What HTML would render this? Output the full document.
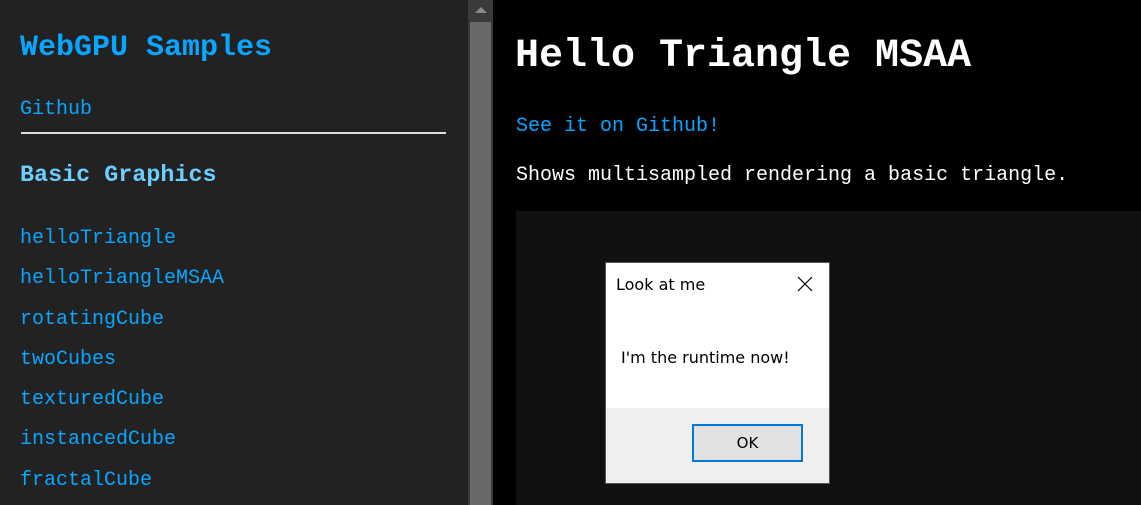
<!DOCTYPE html>
<html><head><style>
*{margin:0;padding:0;box-sizing:border-box}
body{width:1141px;height:505px;overflow:hidden;background:#000;font-family:"Liberation Mono",monospace;position:relative}
.side{position:absolute;left:0;top:0;width:468px;height:505px;background:#222}
.sb{position:absolute;left:468px;top:0;width:25px;height:505px;background:#3a3a3a}
.thumb{position:absolute;left:470px;top:22px;width:21px;height:483px;background:#686868}
.arr{position:absolute;left:475px;top:7px;width:0;height:0;border-left:6px solid transparent;border-right:6px solid transparent;border-bottom:6px solid #8a8a8a}
.t{position:absolute;white-space:nowrap;line-height:1}
.lk{color:#0aa5ff;font-size:20px}
.hr{position:absolute;left:21px;top:132px;width:425px;height:2px;background:#ddd}
.canvas{position:absolute;left:516px;top:211px;width:625px;height:294px;background:#111}
.dlg{position:absolute;left:605px;top:262px;width:225px;height:222px;background:#fff;border:1px solid #555;font-family:"DejaVu Sans","Liberation Sans",sans-serif}
.foot{position:absolute;left:0;bottom:0;width:100%;height:75px;background:#efefef}
.ok{position:absolute;left:86px;top:16px;width:111px;height:38px;border:2px solid #0078d7;background:#e1e1e1;text-align:center;line-height:34px;font-size:15px;color:#000}
</style></head><body>
<div class="side"></div>
<div class="sb"></div><div class="thumb"></div><div class="arr"></div>
<div class="t" style="left:20px;top:33px;font-size:30px;font-weight:bold;color:#0aa5ff">WebGPU Samples</div>
<div class="t lk" style="left:20px;top:100px">Github</div>
<div class="hr"></div>
<div class="t" style="left:20px;top:165px;font-size:23.4px;font-weight:bold;color:#6ccdff">Basic Graphics</div>
<div class="t lk" style="left:20px;top:229px">helloTriangle</div>
<div class="t lk" style="left:20px;top:269px">helloTriangleMSAA</div>
<div class="t lk" style="left:20px;top:310px">rotatingCube</div>
<div class="t lk" style="left:20px;top:350px">twoCubes</div>
<div class="t lk" style="left:20px;top:390px">texturedCube</div>
<div class="t lk" style="left:20px;top:430px">instancedCube</div>
<div class="t lk" style="left:20px;top:471px">fractalCube</div>
<div class="t" style="left:515px;top:37px;font-size:40px;font-weight:bold;color:#fff">Hello Triangle MSAA</div>
<div class="t lk" style="left:516px;top:117px">See it on Github!</div>
<div class="t" style="left:516px;top:166px;font-size:20px;color:#fff">Shows multisampled rendering a basic triangle.</div>
<div class="canvas"></div>
<div class="dlg">
<div class="t" style="left:10px;top:14px;font-size:16px;color:#000">Look at me</div>
<svg style="position:absolute;left:191px;top:13px" width="16" height="16"><path d="M1 1L15 15M15 1L1 15" stroke="#000" stroke-width="1.2"/></svg>
<div class="t" style="left:15px;top:87px;font-size:16px;color:#000">I'm the runtime now!</div>
<div class="foot"><div class="ok">OK</div></div>
</div>
</body></html>
